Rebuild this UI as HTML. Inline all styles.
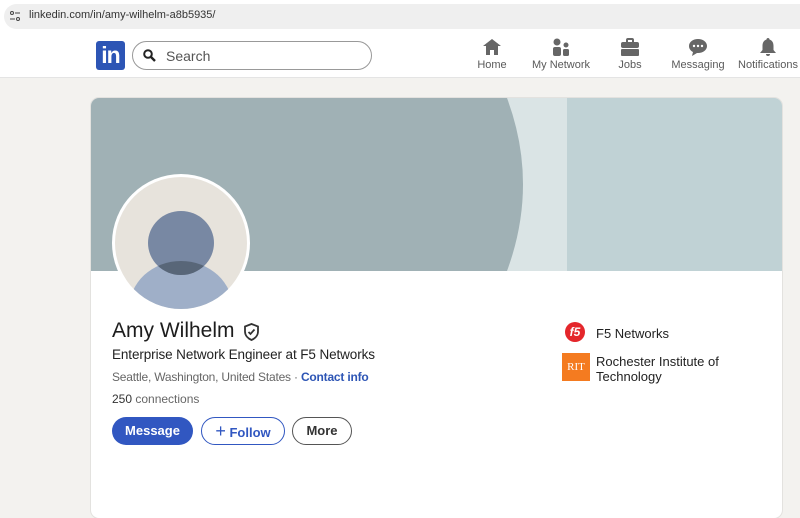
<!DOCTYPE html>
<html><head><style>
*{margin:0;padding:0;box-sizing:border-box}
body{width:800px;height:462px;overflow:hidden;background:#f3f2ef;font-family:"Liberation Sans",sans-serif;position:relative}
.abs{position:absolute}
.urlbar{left:0;top:0;width:800px;height:33px;background:#fff}
.url{left:4px;top:4px;width:800px;height:25px;background:#efefef;border-radius:13px 0 0 13px}
.nav{left:0;top:33px;width:800px;height:45px;background:#fff;border-bottom:1px solid #e4e4e4}
.navi{position:absolute;top:38px;text-align:center;font-size:11px;color:#5a5a5a}
.navi svg{display:block;margin:0 auto 3px}
.card{left:91px;top:98px;width:691px;height:420px;background:#fff;border-radius:8px;overflow:hidden;box-shadow:0 0 0 1px #e3e2df}
</style></head><body>
<div class="abs urlbar"></div>
<div class="abs url"></div>
<svg class="abs" style="left:9px;top:10px" width="12" height="12" viewBox="0 0 12 12"><circle cx="3" cy="3" r="1.5" fill="none" stroke="#444"/><line x1="6" y1="3" x2="11" y2="3" stroke="#444"/><circle cx="9" cy="9" r="1.5" fill="none" stroke="#444"/><line x1="1" y1="9" x2="6" y2="9" stroke="#444"/></svg>
<div class="abs" style="left:29px;top:9px;font-size:11px;color:#333">linkedin.com/in/amy-wilhelm-a8b5935/</div>
<div class="abs nav"></div>
<div class="abs" style="left:96px;top:41px;width:29px;height:29px;background:#2d55b5;border-radius:3px;color:#fff;font-weight:bold;font-size:23px;line-height:29px;text-align:center;letter-spacing:-1px">in</div>
<div class="abs" style="left:132px;top:41px;width:240px;height:29px;border:1px solid #999;border-radius:15px"></div>
<svg class="abs" style="left:143px;top:49px" width="13" height="13" viewBox="0 0 13 13"><circle cx="5" cy="5" r="3.8" fill="none" stroke="#222" stroke-width="2"/><line x1="8" y1="8" x2="12" y2="12" stroke="#222" stroke-width="2.4"/></svg>
<div class="abs" style="left:166px;top:48px;font-size:14px;color:#555">Search</div>
<div class="navi" style="left:470px;width:44px"><svg width="20" height="18" viewBox="0 0 20 18"><path d="M10 1L1 8h3v9h4v-5h4v5h4V8h3z" fill="#666"/></svg>Home</div>
<div class="navi" style="left:528px;width:66px"><svg width="20" height="18" viewBox="0 0 20 18"><circle cx="6" cy="4" r="3.5" fill="#666"/><rect x="2" y="9" width="8" height="9" rx="2" fill="#666"/><circle cx="15" cy="7" r="2.5" fill="#666"/><rect x="12" y="11" width="6" height="7" rx="1.5" fill="#666"/></svg>My Network</div>
<div class="navi" style="left:610px;width:40px"><svg width="20" height="18" viewBox="0 0 20 18"><rect x="7" y="1" width="6" height="4" rx="1" fill="none" stroke="#666" stroke-width="2"/><rect x="1" y="4" width="18" height="6" rx="2" fill="#666"/><rect x="1" y="11" width="18" height="7" rx="1" fill="#666"/></svg>Jobs</div>
<div class="navi" style="left:670px;width:56px"><svg width="20" height="18" viewBox="0 0 20 18"><path d="M10 1C5 1 1 4 1 8c0 3 2 5 4 6l-1 4 5-3h1c5 0 9-3 9-7s-4-7-9-7z" fill="#666"/><circle cx="6" cy="8" r="1.2" fill="#fff"/><circle cx="10" cy="8" r="1.2" fill="#fff"/><circle cx="14" cy="8" r="1.2" fill="#fff"/></svg>Messaging</div>
<div class="navi" style="left:736px;width:64px"><svg width="20" height="18" viewBox="0 0 20 18"><path d="M10 0c-1 0-1.5.7-1.5 1.5C5.5 2.5 4.5 5 4.5 8v4L2 15h16l-2.5-3V8c0-3-1-5.5-4-6.5C11.5.7 11 0 10 0z" fill="#666"/><path d="M8 16h4a2 2 0 0 1-4 0z" fill="#666"/></svg>Notifications</div>
<div class="abs card">
 <svg class="abs" style="left:0;top:0" width="691" height="173"><rect width="691" height="173" fill="#dae4e5"/><rect x="476" width="215" height="173" fill="#c0d2d5"/><path d="M0 0H416Q448 86 416 173H0z" fill="#a0b1b5"/></svg>
</div>
<div class="abs" style="left:112px;top:174px;width:138px;height:138px;border-radius:50%;background:#fff"></div>
<svg class="abs" style="left:115px;top:177px" width="132" height="132" viewBox="0 0 132 132"><defs><clipPath id="c"><circle cx="66" cy="66" r="66"/></clipPath><clipPath id="d"><ellipse cx="66" cy="132" rx="52" ry="48"/></clipPath></defs><g clip-path="url(#c)"><rect width="132" height="132" fill="#e7e3dc"/><ellipse cx="66" cy="132" rx="52" ry="48" fill="#9fafc8"/><ellipse cx="66" cy="66" rx="33" ry="32" fill="#7888a3"/><ellipse cx="66" cy="66" rx="33" ry="32" fill="#586678" clip-path="url(#d)"/></g></svg>
<div class="abs" style="left:112px;top:319px;font-size:21px;color:#1d1d1d">Amy Wilhelm</div>
<svg class="abs" style="left:243px;top:323px" width="17" height="18" viewBox="0 0 17 18"><path d="M8.5 1L2 3.5v5c0 4 3 7 6.5 8.5 3.5-1.5 6.5-4.5 6.5-8.5v-5z" fill="none" stroke="#333" stroke-width="1.8"/><path d="M5.5 9l2 2 4-4.5" fill="none" stroke="#333" stroke-width="1.8"/></svg>
<div class="abs" style="left:112px;top:347px;font-size:13.5px;color:#222;letter-spacing:-0.1px">Enterprise Network Engineer at F5 Networks</div>
<div class="abs" style="left:112px;top:370px;font-size:12px;color:#666;letter-spacing:-0.2px">Seattle, Washington, United States · <span style="color:#2d55b5;font-weight:bold">Contact info</span></div>
<div class="abs" style="left:112px;top:392px;font-size:12px;color:#666"><span style="color:#333">250</span> connections</div>
<div class="abs" style="left:112px;top:417px;width:81px;height:28px;background:#3157c1;border-radius:14px;color:#fff;font-weight:bold;font-size:13px;line-height:28px;text-align:center">Message</div>
<div class="abs" style="left:201px;top:417px;width:84px;height:28px;border:1px solid #3157c1;border-radius:14px;color:#3157c1;font-weight:bold;font-size:13px;line-height:26px;text-align:center"><span style="font-size:18px;font-weight:normal">+</span> Follow</div>
<div class="abs" style="left:292px;top:417px;width:60px;height:28px;border:1px solid #555;border-radius:14px;color:#333;font-weight:bold;font-size:13px;line-height:26px;text-align:center">More</div>
<div class="abs" style="left:565px;top:322px;width:20px;height:20px;border-radius:50%;background:#e4262b;color:#fff;font-size:12px;font-weight:bold;line-height:20px;text-align:center;font-style:italic">f5</div>
<div class="abs" style="left:596px;top:326px;font-size:13px;color:#222">F5 Networks</div>
<div class="abs" style="left:562px;top:353px;width:28px;height:28px;background:#f47b20;color:#fff;font-family:'Liberation Serif',serif;font-size:11px;line-height:28px;text-align:center">RIT</div>
<div class="abs" style="left:596px;top:354px;font-size:13px;color:#222;line-height:15px">Rochester Institute of<br>Technology</div>
</body></html>
